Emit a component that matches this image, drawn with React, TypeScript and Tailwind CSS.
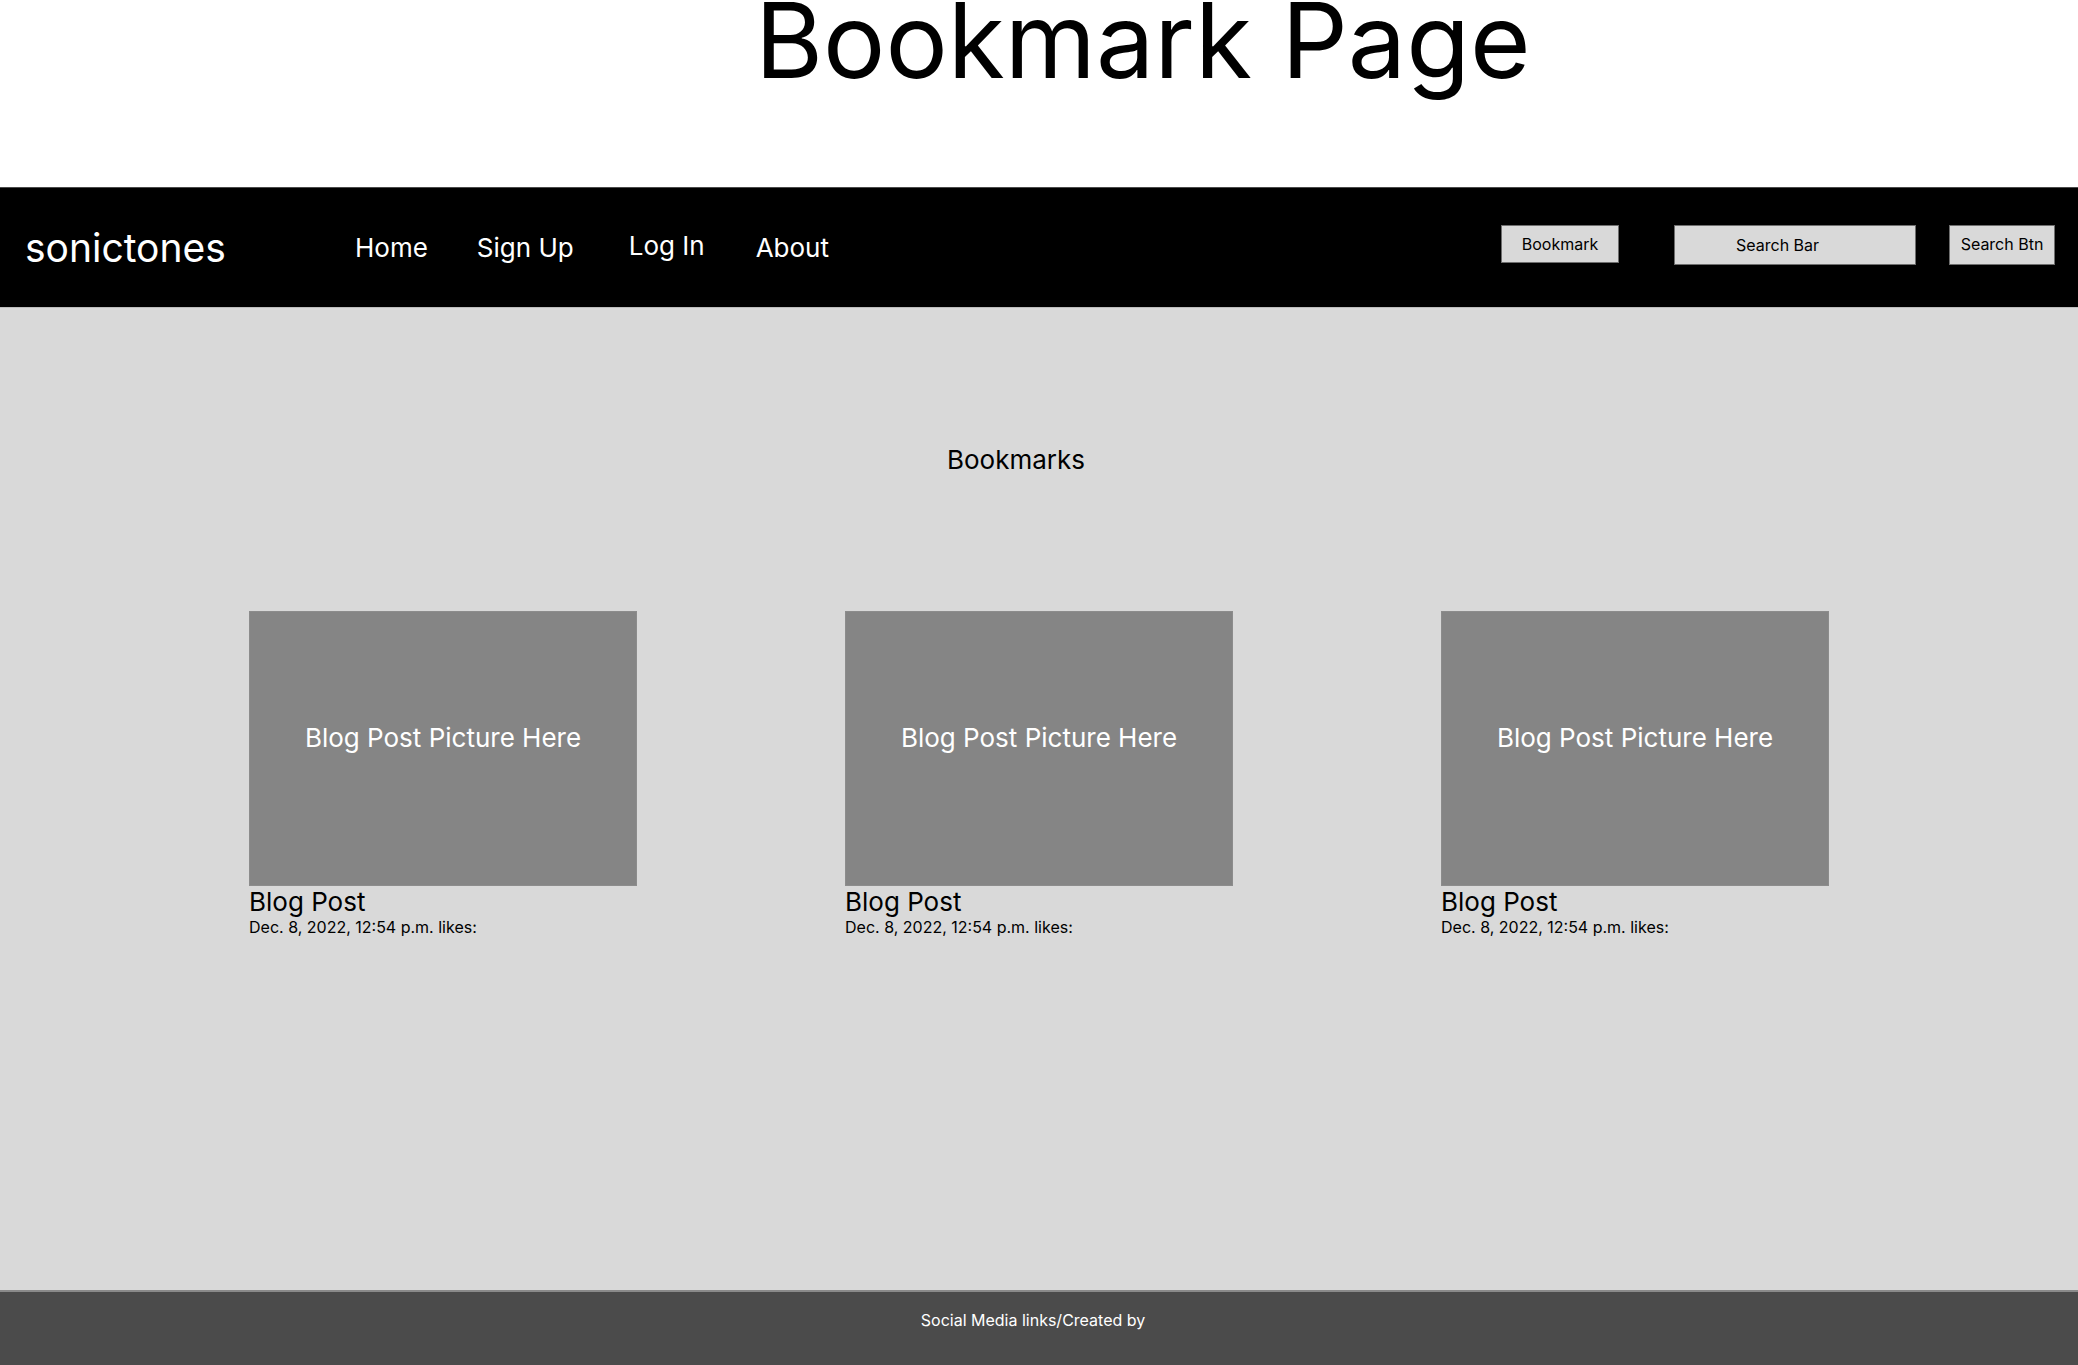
import React from 'react';

const font = { fontFamily: 'Inter, "Noto Sans", sans-serif' };

const posts = [1, 2, 3];

function PostCard() {
  return (
    <div className="w-[388px]">
      <div className="flex h-[275px] w-[388px] items-center justify-center border border-[#8c8c8c] bg-[#858585] pb-[21px]">
        <span className="text-[26px] leading-[32px] text-white">Blog Post Picture Here</span>
      </div>
      <p className="text-[26px] leading-[32px] text-black">Blog Post</p>
      <p className="text-[16px] leading-[18px] text-black">Dec. 8, 2022, 12:54 p.m. likes:</p>
    </div>
  );
}

export default function App() {
  return (
    <div className="flex h-[1365px] w-[2078px] flex-col overflow-hidden bg-white" style={font}>
      <div className="h-[187px] shrink-0 overflow-hidden">
        <h1 className="pl-[755px] text-[104px] font-normal leading-[80px] text-black">Bookmark Page</h1>
      </div>

      <header className="flex h-[120px] shrink-0 items-center border-t border-[#4a4a4a] bg-black text-white">
        <div className="ml-[25px] w-[330px] text-[39px] leading-[46px]">sonictones</div>
        <nav className="flex items-center text-[26px] leading-[30px]">
          <a>Home</a>
          <a className="ml-[49px]">Sign Up</a>
          <a className="ml-[55px] -mt-[4px]">Log In</a>
          <a className="ml-[51px]">About</a>
        </nav>
        <div className="ml-auto mr-[23px] flex items-start self-start pt-[37px] text-[16px] text-black">
          <button className="flex h-[38px] w-[118px] items-center justify-center border border-[#6e6e6e] bg-[#d9d9d9]">Bookmark</button>
          <div className="ml-[55px] flex h-[40px] w-[242px] items-center border border-[#6e6e6e] bg-[#d9d9d9] pl-[61px]">Search Bar</div>
          <button className="ml-[33px] flex h-[40px] w-[106px] items-center justify-center border border-[#6e6e6e] bg-[#d9d9d9] pb-[2px]">Search Btn</button>
        </div>
      </header>

      <main className="flex-1 border-t border-[#bdbdbd] bg-[#d9d9d9]">
        <h2 className="mt-[136px] pl-[947px] text-[26px] leading-[32px] text-black">Bookmarks</h2>
        <div className="mt-[135px] flex gap-[208px] pl-[249px]">
          {posts.map((p) => (
            <PostCard key={p} />
          ))}
        </div>
      </main>

      <footer className="flex h-[75px] shrink-0 justify-center border-t-2 border-[#8a8a8a] bg-[#4b4b4b] pt-[17px]">
        <span className="ml-[-12px] text-[16px] leading-[22px] text-white">Social Media links/Created by</span>
      </footer>
    </div>
  );
}
